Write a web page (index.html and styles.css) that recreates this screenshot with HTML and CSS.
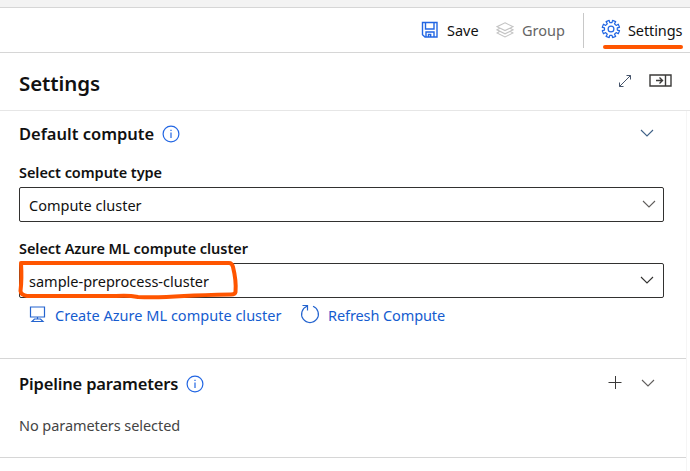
FILE: index.html
```html
<!DOCTYPE html>
<html lang="en">
<head>
<meta charset="utf-8">
<title>Settings</title>
<link rel="stylesheet" href="styles.css">
</head>
<body>
<div class="strip"></div>
<nav class="toolbar">
  <button class="tool save">
    <svg width="18" height="18" viewBox="0 0 18 18" fill="none" stroke="#2266e3" stroke-width="1.4"><path d="M1.500 1.500h14.500v14.500H4L1.500 13.700zM4.500 1.500V8h8.500V1.500M5 16v-5h8v5M7.500 16v-2.500h2.200V16"/></svg>
    <span>Save</span>
  </button>
  <button class="tool group">
    <svg width="18" height="16" viewBox="0 0 18 16" fill="none" stroke="#c4c4c4" stroke-width="1.1"><path d="M9 .8 17 4.7 9 8.6 1 4.7zM3.5 6.4 1 7.8l8 4 8-4-2.500-1.400M3.500 9.500 1 11l8 4 8-4-2.500-1.500"/></svg>
    <span>Group</span>
  </button>
  <div class="divider"></div>
  <button class="tool settings">
    <svg width="20" height="20" viewBox="0 0 20 20" fill="none" stroke="#2266e3" stroke-width="1.2" stroke-linejoin="round"><path transform="translate(10 10) scale(1.120) translate(-9.900 -10)" stroke-width="1.050" d="M8.300 2.300l.5 2h2l.5-2 2.800 1.100-1.100 1.900 1.500 1.500 1.900-1.100 1.100 2.800-2 .5v2l2 .5-1.100 2.800-1.900-1.100-1.500 1.500 1.100 1.900-2.800 1.100-.5-2h-2l-.5 2-2.800-1.100 1.100-1.900-1.500-1.500-1.900 1.100L2.100 11.500l2-.5V9l-2-.5 1.100-2.800 1.900 1.100 1.500-1.500-1.100-1.900z"/><circle cx="10" cy="10" r="2.900"/></svg>
    <span>Settings</span>
  </button>
</nav>
<header class="panel-head">
  <h1>Settings</h1>
  <svg class="expand" width="14" height="14" viewBox="0 0 14 14" fill="none" stroke="#46546a"><path d="M1.500 12.500l11-11M8.500 1.500h4v4M1.500 8.500v4h4"/></svg>
  <svg class="dock" width="23" height="13" viewBox="0 0 23 13" fill="none" stroke="#3b3a39" stroke-width="1.400"><path d="M1 1h21v11H1zM16.500 1v11M7 6.500h6.500M10.500 3.500l3 3-3 3"/></svg>
</header>
<main class="panel">
  <section class="compute">
    <div class="section-head">
      <h2>Default compute</h2>
      <svg class="info" width="18" height="18" viewBox="0 0 18 18" fill="none" stroke="#2266e3" stroke-width="1.200"><circle cx="9" cy="9" r="7.900"/><path d="M9 7.500V13M9 4.800v1.300"/></svg>
      <svg class="chevron blue" width="14" height="8" viewBox="0 0 14 8"><path d="M1 1l6 6 6-6"/></svg>
    </div>
    <label>Select compute type</label>
    <div class="select"><span>Compute cluster</span><svg class="chevron" width="14" height="8" viewBox="0 0 14 8"><path d="M1 1l6 6 6-6"/></svg></div>
    <label>Select Azure ML compute cluster</label>
    <div class="select marked"><span>sample-preprocess-cluster</span><svg class="chevron dark" width="14" height="8" viewBox="0 0 14 8"><path d="M1 1l6 6 6-6"/></svg>
      <svg class="marker" width="222" height="42" viewBox="0 0 222 42" fill="none" stroke="#ff5500" stroke-width="4" stroke-linecap="round" stroke-linejoin="round"><path d="M3 4H211Q214 4 215 8Q218.500 22 217.500 33Q217 35.500 213 35.500Q185 36 166 37Q138 39 120 38Q110 36 98 37L9 37Q3 36 2.500 32Q4 20 3 4"/></svg>
    </div>
    <div class="links">
      <a class="create">
        <svg width="17" height="17" viewBox="0 0 17 17" fill="none" stroke="#2464cf" stroke-width="1.200"><path d="M1.500 1h14v10h-14zM8.500 11v2M3 15.500h11L11.500 13h-6z"/></svg>
        <span>Create Azure ML compute cluster</span>
      </a>
      <a class="refresh">
        <svg width="20" height="20" viewBox="0 0 20 20" fill="none" stroke="#2464cf" stroke-width="1.200"><path d="M13 2.300A8.400 8.400 0 1 1 7 2.300M2.500 1.500H7.500V6.500"/></svg>
        <span>Refresh Compute</span>
      </a>
    </div>
  </section>
  <section class="params">
    <div class="section-head">
      <h2 class="t-pipe">Pipeline parameters</h2>
      <svg class="info" width="18" height="18" viewBox="0 0 18 18" fill="none" stroke="#2266e3" stroke-width="1.200"><circle cx="9" cy="9" r="7.900"/><path d="M9 7.500V13M9 4.800v1.300"/></svg>
      <svg class="plus" width="14" height="14" viewBox="0 0 14 14" stroke="#3b3a39"><path d="M.5 6.500h13M7.500 0v13"/></svg>
      <svg class="chevron" width="14" height="8" viewBox="0 0 14 8"><path d="M1 1l6 6 6-6"/></svg>
    </div>
    <p>No parameters selected</p>
  </section>
</main>
</body>
</html>
```
FILE: styles.css
```css
* { box-sizing: border-box; }
body { margin: 0; width: 690px; height: 471px; overflow: hidden; background: #fff; color: #111; font: 14.5px/20px "Noto Sans", "Open Sans", sans-serif; }
svg { display: block; flex: none; }
h1, h2, p { margin: 0; white-space: nowrap; }
span, label { white-space: nowrap; }
.strip { height: 8px; background: #f3f3f3; border-bottom: 1px solid #d6d6d6; }
.toolbar { height: 45px; border-bottom: 1px solid #d6d6d6; display: flex; align-items: center; padding-left: 421px; }
.tool { border: 0; padding: 0; background: none; color: #111; font: inherit; display: flex; align-items: center; height: 20px; }
.save { width: 75px; gap: 8px; }
.settings svg { margin-bottom: 2px; }
.group { width: 87px; gap: 8px; color: #666; }
.divider { width: 1px; height: 35px; background: #c8c8c8; margin-right: 17px; }
.settings { gap: 7px; position: relative; letter-spacing: -.1px; }
.settings::after { content: ""; position: absolute; left: 2px; top: 25px; width: 80px; height: 4px; border-radius: 2px; background: #ff5500; }
.panel-head { height: 58px; border-bottom: 1px solid #e6e6e6; display: flex; align-items: center; padding: 0 18px 0 19px; }
h1 { font-size: 20.5px; line-height: 28px; font-weight: 600; letter-spacing: -.1px; padding-top: 2px; }
.expand { margin-left: auto; margin-right: 17px; }
.panel-head svg { margin-bottom: 2px; }
.panel { width: 687px; height: 360px; border-right: 1px solid #f5f5f5; }
.compute { height: 248px; padding: 13px 23px 0 19px; border-bottom: 1px solid #d6d6d6; }
.params { height: 99px; padding: 15px 23px 0 19px; border-bottom: 1px solid #d6d6d6; }
.section-head { display: flex; align-items: center; height: 20px; }
h2 { font-size: 16.5px; line-height: 20px; font-weight: 600; }
.t-pipe { letter-spacing: -.16px; }
.info { margin-left: 8px; }
.chevron { fill: none; stroke: #605e5c; stroke-width: 1.1; margin: 0 0 2px auto; }
.blue { stroke: #3f6187; }
.dark { stroke: #323130; }
.section-head .chevron { margin-right: 9px; }
.plus { margin: 0 0 2px auto; }
.plus + .chevron { margin-left: 19px; margin-right: 8px; }
label { display: block; font-weight: 600; height: 20px; letter-spacing: -.05px; }
.compute .section-head { margin-bottom: 18px; }
.select { height: 35px; width: 645px; border: 1px solid #323130; border-radius: 2px; margin: 5px 0 16px; display: flex; align-items: center; padding: 0 7px 0 9px; position: relative; }
.marked { padding-right: 9px; margin-bottom: 6px; }
.marker { position: absolute; left: -2px; top: -5px; }
.links { display: flex; color: #155ccf; padding-left: 10px; }
.links a { display: flex; align-items: center; height: 22px; }
.links svg { margin-bottom: 3px; }
.links .create svg { margin-bottom: 2px; }
.create { width: 271px; gap: 9px; letter-spacing: .02px; }
.refresh { gap: 8px; letter-spacing: -.1px; }
.params p { margin-top: 21px; color: #444; letter-spacing: -.07px; }
```
